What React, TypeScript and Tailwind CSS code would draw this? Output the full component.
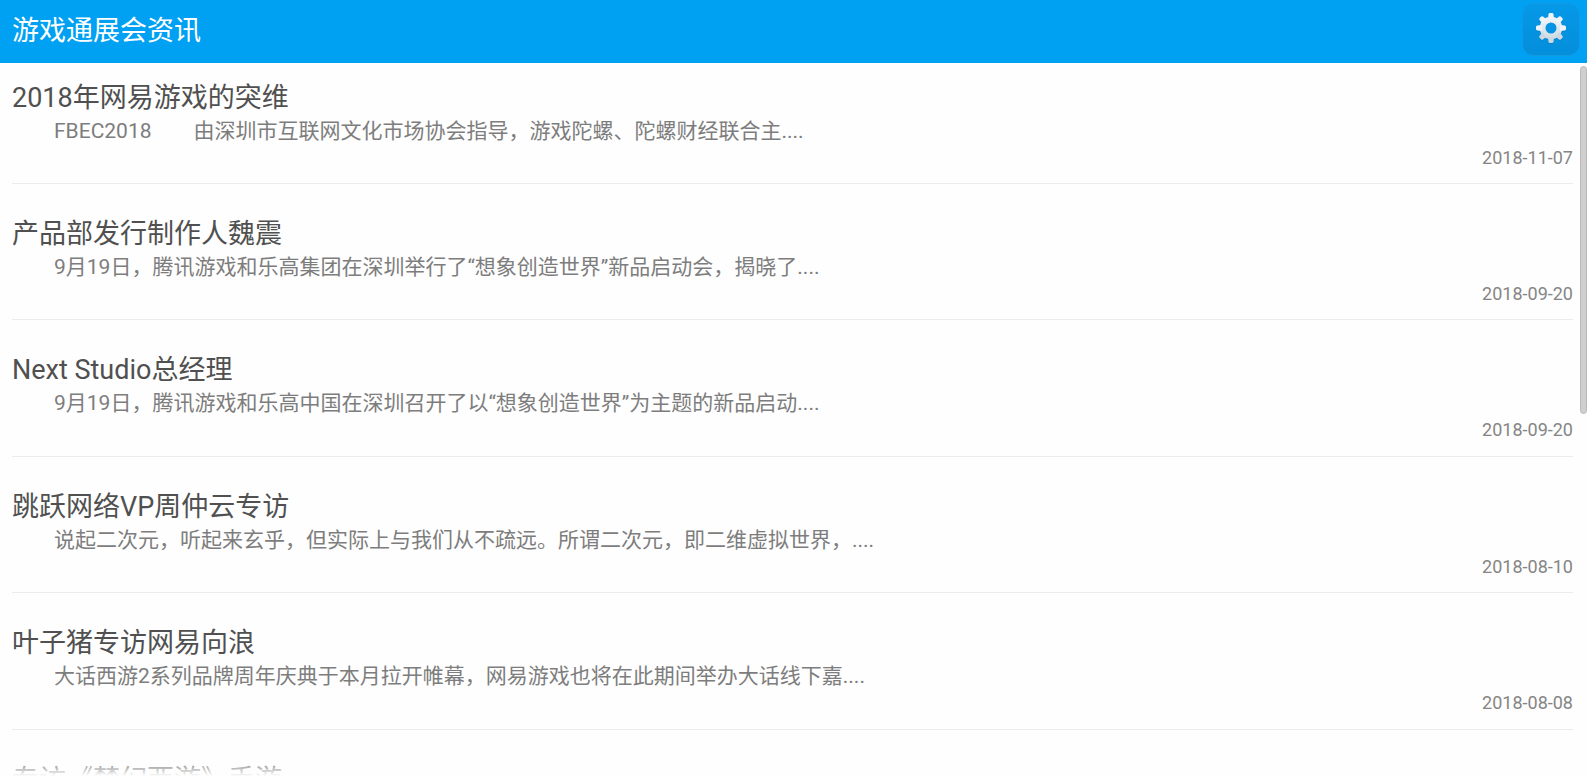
import React from "react";

interface NewsEntry {
  title: string;
  summary: string;
  date: string;
}

const news: NewsEntry[] = [
  {
    title: "2018年网易游戏的突维",
    summary:
      "FBEC2018\u3000\u3000由深圳市互联网文化市场协会指导，游戏陀螺、陀螺财经联合主....",
    date: "2018-11-07",
  },
  {
    title: "产品部发行制作人魏震",
    summary:
      "9月19日，腾讯游戏和乐高集团在深圳举行了“想象创造世界”新品启动会，揭晓了....",
    date: "2018-09-20",
  },
  {
    title: "Next Studio总经理",
    summary:
      "9月19日，腾讯游戏和乐高中国在深圳召开了以“想象创造世界”为主题的新品启动....",
    date: "2018-09-20",
  },
  {
    title: "跳跃网络VP周仲云专访",
    summary:
      "说起二次元，听起来玄乎，但实际上与我们从不疏远。所谓二次元，即二维虚拟世界，....",
    date: "2018-08-10",
  },
  {
    title: "叶子猪专访网易向浪",
    summary:
      "大话西游2系列品牌周年庆典于本月拉开帷幕，网易游戏也将在此期间举办大话线下嘉....",
    date: "2018-08-08",
  },
  {
    title: "专访《梦幻西游》手游",
    summary: "",
    date: "",
  },
];

const TEETH = [0, 45, 90, 135, 180, 225, 270, 315];

const GearIcon = () => (
  <svg viewBox="-16 -16 32 32" className="h-8 w-8" aria-hidden="true">
    <defs>
      <linearGradient id="gear" x1="0" y1="-15" x2="0" y2="15" gradientUnits="userSpaceOnUse">
        <stop offset="0" stopColor="#f8fafc" />
        <stop offset="1" stopColor="#c8d6e0" />
      </linearGradient>
      <mask id="gear-hole">
        <rect x="-16" y="-16" width="32" height="32" fill="#fff" />
        <circle r="5.5" fill="#000" />
      </mask>
    </defs>
    <g mask="url(#gear-hole)">
      <g fill="#0670ad" opacity="0.5" transform="translate(0 1)">
        <circle r="11" />
        {TEETH.map((angle) => (
          <rect key={angle} x="-2.5" y="-15" width="5" height="8" rx="1.5" transform={`rotate(${angle})`} />
        ))}
      </g>
      <circle r="11.2" fill="url(#gear)" />
      {TEETH.map((angle) => (
        <path
          key={angle}
          d="M-3 -9 L-2.5 -13.8 Q-2.3 -15 -1.2 -15 H1.2 Q2.3 -15 2.5 -13.8 L3 -9 Z"
          fill={angle > 90 && angle < 270 ? "#ccd9e2" : "#eef3f7"}
          transform={`rotate(${angle})`}
        />
      ))}
    </g>
  </svg>
);

const NewsItem = ({ title, summary, date }: NewsEntry) => (
  <li className="border-b border-[#ebebeb] pt-8 pb-[14px] first:pt-[17px] first:pb-[13px] even:pb-[13px]">
    <h2 className="text-[27px] leading-9 text-[#505050]">{title}</h2>
    <p className="truncate pl-[42px] text-[21px] leading-[30px] text-[#7d7d7d]">
      {summary}
    </p>
    <time className="block text-right text-lg leading-6 text-[#858585]">
      {date}
    </time>
  </li>
);

export default function App() {
  return (
    <div className="relative flex h-screen flex-col overflow-hidden bg-[#fefefe] font-['Roboto','Noto_Sans_CJK_SC',sans-serif]">
      <header className="flex h-[63px] shrink-0 items-start justify-between bg-[#00a0f3] pl-3 pr-[7px]">
        <h1 className="pt-[13px] text-[27px] leading-9 text-white">
          游戏通展会资讯
        </h1>
        <button
          type="button"
          aria-label="设置"
          className="mt-[3px] flex h-[53px] w-[58px] items-start justify-center rounded-xl border border-[#1299e2] bg-linear-to-b from-[#0599e8] to-[#048edb] pt-2"
        >
          <GearIcon />
        </button>
      </header>

      <main className="relative min-h-0 flex-1 overflow-hidden">
        <ul className="pl-3 pr-[14px]">
          {news.map((item) => (
            <NewsItem key={item.title} {...item} />
          ))}
        </ul>
        {/* scroll thumb */}
        <div className="absolute top-[3px] right-0 h-[348px] w-[7px] rounded-full border border-[#b9b9b9] bg-[#cfcfcf]" />
        {/* fading edge */}
        <div className="absolute inset-x-0 bottom-0 h-5 bg-linear-to-t from-[#fefefe] to-transparent" />
      </main>
    </div>
  );
}
